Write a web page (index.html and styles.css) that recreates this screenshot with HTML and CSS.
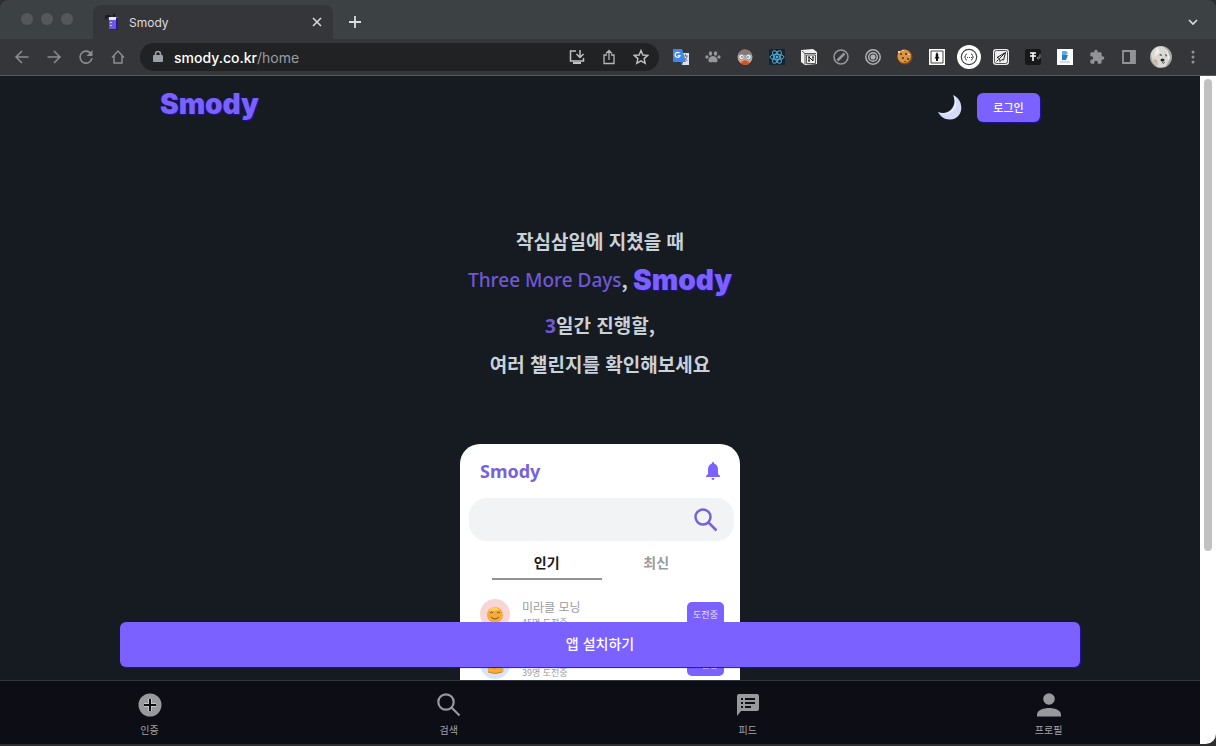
FILE: index.html
```html
<!DOCTYPE html>
<html lang="ko">
<head>
<meta charset="utf-8">
<meta name="viewport" content="width=device-width, initial-scale=1">
<title>Smody</title>
<link rel="stylesheet" href="styles.css">
</head>
<body>
<div class="window">
  <div class="tabbar">
    <div class="lights"><span></span><span></span><span></span></div>
    <div class="tab">
      <svg width="16" height="18" viewBox="0 0 16 18"><path d="M1 6V3h4l1 2M9 1v4" fill="none" stroke="#111128" stroke-width="1.500"/><path d="M4 4h9v12H4z" fill="#7057df"/><path d="M4 4h7v3H4z" fill="#e9e7f5"/><path d="M11 5h2v12H5v-1h6z" fill="#2515a0"/><path d="M5 9h2v1H5zm0 3h2v1H5z" fill="#cfc8ff"/></svg>
      <span class="tab-title">Smody</span>
      <button class="icon-btn" aria-label="Close tab"><svg width="12" height="12" viewBox="0 0 12 12"><path d="M2 2l8 8M10 2l-8 8" stroke="#dadce0" stroke-width="1.5"/></svg></button>
    </div>
    <button class="icon-btn new-tab" aria-label="New tab"><svg width="14" height="14" viewBox="0 0 14 14"><path d="M7 1v12M1 7h12" stroke="#dadce0" stroke-width="1.8"/></svg></button>
    <button class="icon-btn tab-search" aria-label="Search tabs"><svg width="12" height="12" viewBox="0 0 12 12"><path d="M2 4l4 4 4-4" fill="none" stroke="#dadce0" stroke-width="1.7"/></svg></button>
  </div>
  <div class="toolbar">
    <div class="history">
      <button class="icon-btn" aria-label="Back"><svg width="16" height="16" viewBox="0 0 16 16"><path d="M14.500 8H2M8 2L2 8l6 6" fill="none" stroke="#8b8d90" stroke-width="1.500"/></svg></button>
      <button class="icon-btn" aria-label="Forward"><svg width="16" height="16" viewBox="0 0 16 16"><path d="M1.500 8H14M8 2l6 6-6 6" fill="none" stroke="#8b8d90" stroke-width="1.500"/></svg></button>
      <button class="icon-btn" aria-label="Reload"><svg width="16" height="16" viewBox="0 0 16 16"><path d="M12.600 4.200A6 6 0 1 0 14 9" fill="none" stroke="#8b8d90" stroke-width="1.600"/><path d="M14.500 1v6h-6z" fill="#8b8d90"/></svg></button>
      <button class="icon-btn" aria-label="Home"><svg width="16" height="16" viewBox="0 0 16 16"><path d="M2 8.500L8 2l6 6.500M4 7v7h8V7" fill="none" stroke="#8b8d90" stroke-width="1.500"/></svg></button>
    </div>
    <div class="address">
      <svg width="10" height="14" viewBox="0 0 10 14"><path d="M1 5h8q1 0 1 1v5q0 1-1 1H1q-1 0-1-1V6q0-1 1-1z" fill="#9aa0a6"/><path d="M2.500 6V4a2.500 2.500 0 0 1 5 0v2" fill="none" stroke="#9aa0a6" stroke-width="1.500"/></svg>
      <span class="url"><b>smody.co.kr</b>/home</span>
      <button class="icon-btn" aria-label="Install"><svg width="16" height="16" viewBox="0 0 16 16"><path d="M7 2H1.500v10h13V9" fill="none" stroke="#c0c2c5" stroke-width="1.500"/><path d="M4 13h8v2H4z" fill="#c0c2c5"/><path d="M11 1v7M7.500 5L11 8.500 14.500 5" fill="none" stroke="#c0c2c5" stroke-width="1.500"/></svg></button>
      <button class="icon-btn" aria-label="Share"><svg width="16" height="16" viewBox="0 0 16 16"><path d="M6 6H3v8.500h10V6h-3M8 11V2M5 4.500l3-3 3 3" fill="none" stroke="#b4b6b9" stroke-width="1.300"/></svg></button>
      <button class="icon-btn" aria-label="Bookmark"><svg width="16" height="16" viewBox="0 0 16 16"><path d="M8 1.500l1.900 4.500 4.900.400-3.700 3.200 1.100 4.800L8 11.900l-4.200 2.500 1.100-4.800L1.200 6.400 6.100 6z" fill="none" stroke="#c0c2c5" stroke-width="1.400"/></svg></button>
    </div>
    <div class="extensions">
      <svg class="ext" viewBox="0 0 16 16"><path d="M6 4h10v12H9z" fill="#dce2ed"/><path d="M0 0h9l4 13H1q-1 0-1-1z" fill="#4385ed"/><path d="M10 13l-1 3-2-3z" fill="#2457b8"/><path d="M6.500 4.200A2.500 2.500 0 1 0 7 6.500H4.700" fill="none" stroke="#fff" stroke-width="1.200"/><path d="M10 7h5M12.500 5v2M14 7q-1 4-3 5M11.500 9l3 3" stroke="#697b9b" fill="none"/></svg>
      <svg class="ext" viewBox="0 0 16 16" fill="#96989b"><ellipse cx="5.500" cy="4.500" rx="1.700" ry="2.200"/><ellipse cx="10.500" cy="4.500" rx="1.700" ry="2.200"/><ellipse cx="2" cy="8" rx="1.600" ry="1.800"/><ellipse cx="14" cy="8" rx="1.600" ry="1.800"/><path d="M8 7c3 0 5 3 4.500 5-.5 2-2.500 1-4.500 1s-4 1-4.500-1C3 10 5 7 8 7z"/></svg>
      <svg class="ext" viewBox="0 0 16 16"><circle cx="8" cy="8" r="7.500" fill="#dba58a"/><path d="M1 6Q3 0 8 .500T15 6z" fill="#8c7770"/><path d="M4 13l4-2 4 2-1 3H6z" fill="#ce542c"/><circle cx="4.500" cy="8" r="2.800" fill="#e2eff4" stroke="#8298a4"/><circle cx="11.500" cy="8" r="2.800" fill="#e2eff4" stroke="#8298a4"/><path d="M4 8h2M10 8h2" stroke="#50606c"/></svg>
      <svg class="ext" viewBox="0 0 16 16"><path d="M0 0h16v16H0z" fill="#152431"/><g fill="none" stroke="#55acd2"><ellipse cx="8" cy="8" rx="7" ry="2.700"/><ellipse cx="8" cy="8" rx="7" ry="2.700" transform="rotate(60 8 8)"/><ellipse cx="8" cy="8" rx="7" ry="2.700" transform="rotate(120 8 8)"/></g><circle cx="8" cy="8" r="1.500" fill="#55acd2"/></svg>
      <svg class="ext" viewBox="0 0 16 16"><path d="M0 1l12-1 4 3v12l-12 1-4-3z" fill="#f0f0ed"/><path d="M1 2l3 2.500h11M4 4.500V15M5.500 6h9v8.500h-9z" fill="none" stroke="#333" stroke-width=".8"/><path d="M8 12V8l4 4V8M7 8h2M11 8h2M7 12h2" fill="none" stroke="#111"/></svg>
      <svg class="ext" viewBox="0 0 16 16" fill="none" stroke="#97999c"><circle cx="8" cy="8" r="7" stroke-width="1.500"/><path d="M4.500 11.500l7-7" stroke-width="2.500"/></svg>
      <svg class="ext" viewBox="0 0 16 16" fill="none" stroke="#b0b2b5" stroke-width="1.500"><circle cx="8" cy="8" r="7.200"/><circle cx="8" cy="8" r="4.300"/><circle cx="8" cy="8" r="1.800" fill="#b0b2b5"/></svg>
      <svg class="ext" viewBox="0 0 16 16"><circle cx="8" cy="8" r="7.500" fill="#8d4b16"/><circle cx="7.200" cy="7.200" r="6.700" fill="#d99542"/><path d="M3 4h2v2H3zm5 0h2v2H8zM5 8h2v2H5zm5 1h2v2h-2zM7 12h2v1H7z" fill="#7c421e"/><path d="M1 2h2v2H1zm4-1h2v1H5zm6 4h2v1h-2z" fill="#e8d9b2"/></svg>
      <svg class="ext" viewBox="0 0 16 16"><path d="M0 0h16v16H0z" fill="#fff"/><path d="M2 2h12v12H2z" fill="none" stroke="#444"/><path d="M8 3l1.500 3-.5 1 1.500 2.500H9V12H7V9.500H5.500L7 7l-.5-1z" fill="#111"/></svg>
      <svg class="ext ext-large" viewBox="0 0 24 24"><circle cx="12" cy="12" r="12" fill="#fff"/><circle cx="12" cy="12" r="7.700" fill="none" stroke="#444" stroke-width="1.200"/><path d="M10 9q-1.500 0-1.500 1.500T7.500 12q1 0 1 1.500T10 15M14 9q1.500 0 1.500 1.500t1 1.500q-1 0-1 1.500T14 15" fill="none" stroke="#444"/><path d="M10 12.500h1m1 0h1m1 0h1" stroke="#444"/></svg>
      <svg class="ext" viewBox="0 0 16 16"><rect width="16" height="16" rx="3" fill="#eee"/><rect x="1.500" y="1.500" width="13" height="13" rx="2" fill="none" stroke="#555"/><path d="M12.500 3.500L4 8.500l2.500 1 .5 3 2-2 1.500.500zM12.500 3.500l-6 6M3.500 12.500l2-2" fill="none" stroke="#222"/></svg>
      <svg class="ext" viewBox="0 0 16 16"><rect width="16" height="16" rx="2" fill="#171819"/><path d="M5 4h6M8 4v8M5 7h6" stroke="#fff" stroke-width="1.600"/><path d="M15 5v4h-3M13.500 7.500L12 9l1.500 1.500" fill="none" stroke="#888"/></svg>
      <svg class="ext" viewBox="0 0 16 16"><path d="M0 0h16v16H0z" fill="#fafcfd"/><path d="M5 2h4l2 2-2 2H5z" fill="#58aee8"/><path d="M5 6h6l-2 5H5z" fill="#287dc4"/><path d="M3 13h10" stroke="#a7bccb"/></svg>
      <svg class="ext" viewBox="0 0 24 24"><path d="M20.500 11H19V7a2 2 0 0 0-2-2h-4V3.500a2.500 2.500 0 0 0-5 0V5H4a2 2 0 0 0-2 2v3.800h1.500a2.700 2.700 0 0 1 0 5.400H2V20a2 2 0 0 0 2 2h3.800v-1.500a2.700 2.700 0 0 1 5.400 0V22H17a2 2 0 0 0 2-2v-4h1.500a2.500 2.500 0 0 0 0-5z" fill="#919396"/></svg>
      <svg class="ext" viewBox="0 0 16 16"><path d="M2 2h12v12H2z" fill="none" stroke="#919396" stroke-width="1.800"/><path d="M9 2h5v12H9z" fill="#919396"/></svg>
      <svg class="ext ext-large" viewBox="0 0 24 24"><circle cx="12" cy="12" r="11" fill="#a9aaaa"/><path d="M2 8Q6 0 14 1.500l5 4 2 7-4 9-8 1-6-7z" fill="#d9d8d5"/><path d="M8 2l3 5-6 5zM18 6l3 7-2 3z" fill="#f0efeb"/><path d="M3 14l5 1 1 6z" fill="#d3ab91"/><path d="M10 10l2-1 1 2zm6-1l2 1-1 2z" fill="#333"/><ellipse cx="13.500" cy="15" rx="2" ry="1.600" fill="#222"/><path d="M13 17q1 3 3 0" fill="none" stroke="#555"/></svg>
      <svg class="ext" viewBox="0 0 16 16" fill="#919396"><circle cx="8" cy="3" r="1.500"/><circle cx="8" cy="8" r="1.500"/><circle cx="8" cy="13" r="1.500"/></svg>
    </div>
  </div>
  <div class="viewport">
    <div class="page">
      <main class="content">
        <header class="header">
          <a class="logo" href="#">Smody</a>
          <button class="icon-btn" aria-label="다크 모드"><svg width="26" height="26" viewBox="0 0 26 26"><path d="M16 1C28 6 27 25 13 25.500 7 25.500 3 22 1 18 12 22 21 12 16 1z" fill="#d5dcfa"/><path d="M16 1c6 9-1 23-15 17 12 6 24-4 15-17z" fill="#f7f4f4"/></svg></button>
          <button class="login">로그인</button>
        </header>
        <section class="hero">
          <p>작심삼일에 지쳤을 때</p>
          <p class="brand-line"><span class="accent">Three More Days</span>, <span class="logo">Smody</span></p>
          <p><span class="accent">3</span>일간 진행할,</p>
          <p>여러 챌린지를 확인해보세요</p>
        </section>
        <section class="phone">
          <div class="phone-head"><span>Smody</span>
            <svg width="14" height="18" viewBox="0 0 14 18" fill="#7b61ff"><path d="M7 0q1.300 0 1.300 1.800C11 2.500 12 5 12 8v4l2 2v1H0v-1l2-2V8c0-3 1-5.500 3.700-6.200Q5.700 0 7 0zM5.500 16h3q0 2-1.500 2t-1.500-2z"/></svg>
          </div>
          <div class="phone-search"><input type="text" aria-label="챌린지 검색"><svg width="24" height="24" viewBox="0 0 24 24" fill="none" stroke="#7762db" stroke-width="2.500"><circle cx="9" cy="9" r="7.500"/><path d="M14.500 14.500l8 8"/></svg></div>
          <div class="phone-tabs"><button class="active">인기</button><button>최신</button></div>
          <ul class="challenges">
            <li>
              <svg class="avatar" viewBox="0 0 30 30"><circle cx="15" cy="15" r="15" fill="#f8d6d5"/><circle cx="15" cy="16" r="8" fill="#f4ad3c"/><path d="M9 12l2-3 3-1 3 1 3 2z" fill="#ffd15a"/><path d="M10 14q2-2 3 0M17 14q2-2 3 0M11 18q4 4 8 0" fill="none" stroke="#865016"/></svg>
              <div class="info"><strong>미라클 모닝</strong><small>45명 도전중</small></div><button class="badge">도전중</button>
            </li>
            <li>
              <svg class="avatar" viewBox="0 0 30 30"><circle cx="15" cy="15" r="15" fill="#d8e4f8"/><path d="M8 23q-1-11 3-16l4 1-1 4-2 1v5q5-3 10 0 4 4-1 6-6 2-13-1z" fill="#f5ad36"/><path d="M8 23q7 3 14 0M12 18l3 2" fill="none" stroke="#d38422"/></svg>
              <div class="info"><strong>오늘의 운동</strong><small>39명 도전중</small></div><button class="badge">도전중</button>
            </li>
          </ul>
        </section>
        <button class="install">앱 설치하기</button>
      </main>
      <nav class="bottom-nav">
        <a href="#"><svg width="24" height="24" viewBox="0 0 24 24"><circle cx="12" cy="12" r="11.500" fill="#97999d"/><path d="M12 6v12M6 12h12" stroke="#c5c7ca" stroke-width="4"/><path d="M12 6v12M6 12h12" stroke="#0d0e15" stroke-width="2"/></svg>인증</a>
        <a href="#"><svg width="24" height="24" viewBox="0 0 24 24" fill="none" stroke="#97999d" stroke-width="2.200"><circle cx="9" cy="9" r="7.700"/><path d="M14.500 14.500l8 8"/></svg>검색</a>
        <a href="#"><svg width="24" height="24" viewBox="0 0 24 24"><path d="M3 1h18q2 0 2 2v13q0 2-2 2H5l-4 5V3q0-2 2-2z" fill="#97999d"/><path d="M5 6h2m2 0h10M5 10h2m2 0h10M5 14h2m2 0h6" stroke="#0d0e15" stroke-width="2"/></svg>피드</a>
        <a href="#"><svg width="24" height="24" viewBox="0 0 24 24" fill="#97999d"><circle cx="12" cy="6" r="5.800"/><path d="M0 23.500v-2C0 17 7 15 12 15s12 2 12 6.500v2z"/></svg>프로필</a>
      </nav>
    </div>
    <div class="scrollbar"><div class="thumb"></div></div>
  </div>
</div>
</body>
</html>
```
FILE: styles.css
```css
* { box-sizing: border-box; }
body {
  margin: 0;
  background: #302d2f;
  color: #c9d1d9;
  font-family: "Noto Sans CJK KR", sans-serif;
}
button { padding: 0; border: 0; background: none; color: inherit; font: inherit; }
a { color: inherit; text-decoration: none; }
svg { display: block; flex: none; }
p, ul { margin: 0; padding: 0; }

.window {
  display: flex;
  flex-direction: column;
  height: calc(100vh - 2px);
  border-radius: 8px 8px 10px 0;
  overflow: hidden;
  background: #161b22;
}
.icon-btn { display: flex; flex: none; }

.tabbar {
  display: flex;
  align-items: center;
  flex: none;
  height: 39px;
  background: #3c4144;
  font-family: Inter, sans-serif;
}
.lights { display: flex; gap: 8px; width: 93px; padding: 0 0 2px 21px; }
.lights span { width: 12px; height: 12px; border-radius: 50%; background: #55585b; }
.tab {
  display: flex;
  align-items: center;
  align-self: flex-end;
  gap: 8px;
  width: 240px;
  height: 34px;
  padding: 0 10px 0 12px;
  border-radius: 8px 8px 0 0;
  background: #35363a;
  color: #dadce0;
  font-size: 12px;
}
.tab-title { flex: 1; }
.new-tab { margin: 4px 0 0 15px; }
.tab-search { margin: 4px 17px 0 auto; }

.toolbar {
  display: flex;
  align-items: center;
  flex: none;
  height: 37px;
  padding: 0 15px 0 14px;
  border-bottom: 1px solid #55595b;
  background: #35363a;
}
.history { display: flex; gap: 16px; margin-right: 14px; }
.address {
  display: flex;
  align-items: center;
  flex: 1;
  gap: 16px;
  height: 28px;
  padding: 0 10px 0 13px;
  border-radius: 14px;
  background: #202223;
  font-family: Inter, sans-serif;
}
.url { flex: 1; margin-left: -5px; color: #9a9da0; font-size: 14px; }
.url b { color: #fff; font-weight: 500; }
.extensions { display: flex; align-items: center; gap: 16px; margin-left: 14px; }
.ext { width: 16px; height: 16px; }
.ext-large { width: 24px; height: 24px; margin: 0 -4px; }

.viewport { display: flex; flex: 1; min-height: 0; }
.page { display: flex; flex: 1; flex-direction: column; min-width: 0; }
.content { position: relative; flex: 1; min-height: 0; overflow: hidden; }
.header {
  display: flex;
  align-items: center;
  gap: 14px;
  max-width: 880px;
  height: 62px;
  margin: 0 auto;
}
.logo {
  color: #7b61ff;
  font-family: Inter, sans-serif;
  font-size: 28px;
  font-weight: 900;
  line-height: 46px;
  text-shadow: 1px 1px 1px #2410a8;
}
.header .logo { margin: 0 auto 6px 0; }
.login {
  width: 63px;
  height: 29px;
  border-radius: 6px;
  background: #7b61ff;
  box-shadow: 1px 1px 1px #2410a8;
  color: #fff;
  font-size: 11px;
  font-weight: 500;
}
.hero {
  padding-top: 84px;
  font-size: 19px;
  font-weight: 700;
  line-height: 38px;
  text-align: center;
}
.brand-line { display: flex; align-items: center; justify-content: center; height: 46px; padding-bottom: 6px; white-space: pre; }
.brand-line .accent { font-weight: 500; }
.accent { color: #7058d9; font-family: "Noto Sans", sans-serif; }

.phone {
  width: 280px;
  margin: 61px auto 0;
  padding: 0 6px 30px 9px;
  border-radius: 20px;
  background: #fff;
  color: #999b9f;
}
.phone-head {
  display: flex;
  align-items: center;
  justify-content: space-between;
  height: 54px;
  padding: 0 14px 0 11px;
  color: #7762db;
  font-family: "Noto Sans", sans-serif;
  font-size: 18px;
  font-weight: 700;
}
.phone-search {
  display: flex;
  align-items: center;
  height: 43px;
  padding: 0 16px;
  border-radius: 18px;
  background: #f1f3f5;
}
.phone-search input { flex: 1; min-width: 0; border: 0; outline: 0; background: none; }
.phone-tabs { display: flex; padding: 4px 23px 0; }
.phone-tabs button { flex: 1; height: 35px; font-size: 14px; font-weight: 700; border-bottom: 2px solid transparent; }
.phone-tabs .active { color: #17181a; border-color: #909294; }
.challenges { padding: 15px 10px 0 11px; list-style: none; }
.challenges li { display: flex; height: 50px; padding-top: 4px; }
.avatar { width: 30px; height: 30px; }
.info { display: flex; flex: 1; flex-direction: column; padding-left: 12px; line-height: 16px; }
.info strong { font-size: 12px; font-weight: 400; }
.info small { font-size: 9px; }
.badge {
  width: 37px;
  height: 24px;
  margin-top: 3px;
  border-radius: 5px;
  background: #7b61ff;
  color: #e8e3ff;
  font-size: 9px;
}
/* Floats over the scrolling content */
.install {
  position: absolute;
  right: 10%;
  bottom: 13px;
  left: 10%;
  height: 45px;
  padding-bottom: 4px;
  border-radius: 6px;
  background: #7b61ff;
  box-shadow: 1px 1px 1px #2410a8;
  color: #fff;
  font-size: 14px;
  font-weight: 500;
}
.bottom-nav {
  display: flex;
  align-items: center;
  justify-content: space-around;
  flex: none;
  height: 64px;
  padding-top: 6px;
  border-top: 1px solid #30363d;
  background: #0d0e15;
  color: #a0a2a6;
  font-size: 10px;
  line-height: 16px;
}
.bottom-nav a { display: flex; flex-direction: column; align-items: center; gap: 5px; }
.scrollbar { width: 16px; padding: 3px 4px 0; background: #fff; }
.thumb { height: 71%; border-radius: 4px; background: #c1c1c1; }
```
